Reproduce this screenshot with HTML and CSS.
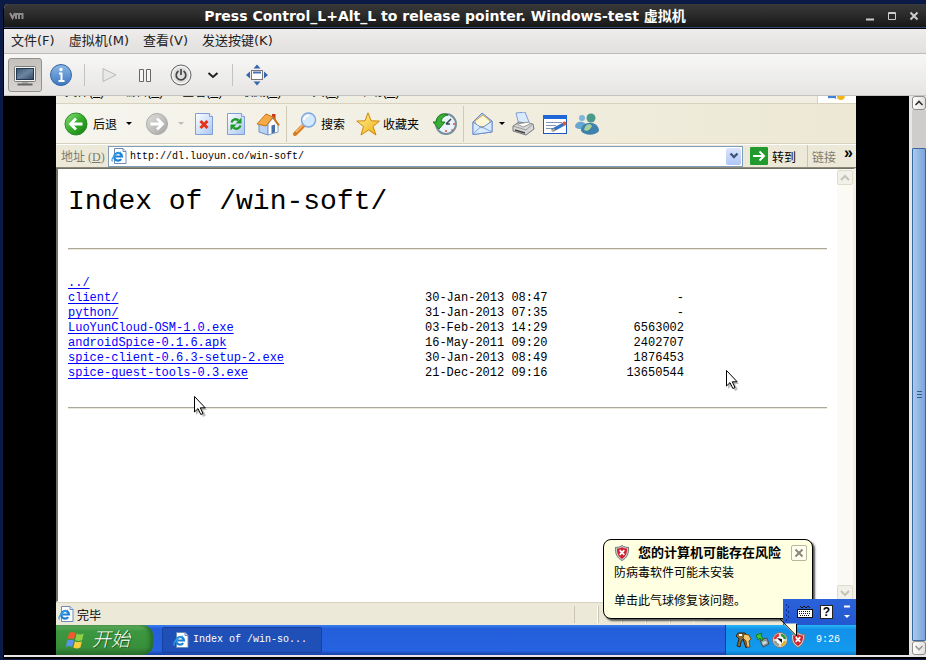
FILE: index.html
```html
<!DOCTYPE html>
<html lang="zh-CN">
<head>
<meta charset="utf-8">
<title>Windows-test 虚拟机</title>
<link rel="stylesheet" href="styles.css">
</head>
<body>
<svg width="0" height="0" class="defs" aria-hidden="true">
  <defs>
    <linearGradient id="gGreen" x1="0" y1="0" x2="1" y2="1"><stop offset="0" stop-color="#8fe07c"/><stop offset=".5" stop-color="#35ad2b"/><stop offset="1" stop-color="#157a12"/></linearGradient>
    <linearGradient id="gGrey" x1="0" y1="0" x2="1" y2="1"><stop offset="0" stop-color="#e0e0de"/><stop offset="1" stop-color="#a3a3a1"/></linearGradient>
    <linearGradient id="gPage" x1="0" y1="0" x2="1" y2="1"><stop offset="0" stop-color="#ffffff"/><stop offset="1" stop-color="#a9c6f2"/></linearGradient>
    <linearGradient id="gInfo" x1="0" y1="0" x2="0" y2="1"><stop offset="0" stop-color="#8db8e6"/><stop offset="1" stop-color="#3c78c0"/></linearGradient>
    <linearGradient id="gStar" x1="0" y1="0" x2="1" y2="1"><stop offset="0" stop-color="#fff79a"/><stop offset="1" stop-color="#f0a90c"/></linearGradient>
    <linearGradient id="gScreen" x1="0" y1="0" x2="1" y2="1"><stop offset="0" stop-color="#3b536f"/><stop offset=".5" stop-color="#6c86a0"/><stop offset="1" stop-color="#2f4661"/></linearGradient>
    <symbol id="ie" viewBox="0 0 16 16">
      <path d="M3.500.500h8.500l3 3v12H3.500z" fill="#fff" stroke="#6f8cb8"/><path d="M12 .500v3h3" fill="#dbe6f7" stroke="#6f8cb8"/>
      <path d="M10.200 11.200A3.900 3.900 0 1 1 11 8.500H4.500" fill="none" stroke="#1c7fd6" stroke-width="2.200"/>
      <path d="M1.500 13.500C-.500 12 3 5.500 10 4.200" fill="none" stroke="#3ca0e6" stroke-width="1.200"/>
    </symbol>
    <symbol id="shield" viewBox="0 0 16 16">
      <path d="M8 .500c2 1.500 4.500 2 6.500 1.800.500 6.200-1.500 10.700-6.500 13.200C3 13 1 8.500 1.500 2.300 3.500 2.500 6 2 8 .500z" fill="#c9cdd2" stroke="#777"/>
      <path d="M8 2.200c1.500 1 3.500 1.500 5 1.400.200 4.700-1.300 8.200-5 10.400C4.300 11.800 2.800 8.300 3 3.600 4.500 3.700 6.500 3.200 8 2.200z" fill="#d3202c"/>
      <path d="M5.700 5.200l4.600 4.600M10.300 5.200L5.700 9.800" stroke="#fff" stroke-width="1.800"/>
    </symbol>
    <symbol id="cursor" viewBox="0 0 14 22">
      <path d="M3 3v17l4-4 3 6 3-1.500-3-5.500h4z" fill="#000" opacity=".25"/>
      <path d="M1.500 1.500v15.500l3.500-3.400 2.800 5.900 2.200-1-2.700-5.700h4.900z" fill="#fff" stroke="#000"/>
    </symbol>
  </defs>
</svg>

<div class="window">
  <header class="titlebar">
    <svg class="vmlogo" width="16" height="10" viewBox="0 0 16 10"><path d="M1 2l2.500 5L6 2M7 8V3h3v5M10 3h3.500v5" fill="none" stroke="#8b8b8b" stroke-width="2"/><path d="M2 3l1.500 4" stroke="#b98888"/></svg>
    <h1 class="title">Press Control_L+Alt_L to release pointer. Windows-test 虚拟机</h1>
    <div class="winbtns">
      <button class="winbtn" aria-label="最小化"><svg width="10" height="10"><path d="M1 8.500h8" stroke="#ccc" stroke-width="2"/></svg></button>
      <button class="winbtn" aria-label="最大化"><svg width="10" height="10"><path d="M1.500 1.500h7v7h-7zM1 2.500h8" fill="none" stroke="#ccc"/></svg></button>
      <button class="winbtn" aria-label="关闭"><svg width="10" height="10"><path d="M1.500 1.500l7 7M8.500 1.500l-7 7" stroke="#ccc" stroke-width="2"/></svg></button>
    </div>
  </header>

  <nav class="menubar">
    <button class="menu">文件(F)</button>
    <button class="menu">虚拟机(M)</button>
    <button class="menu">查看(V)</button>
    <button class="menu">发送按键(K)</button>
  </nav>

  <div class="toolbar">
    <button class="tool pressed" aria-label="控制台"><svg width="24" height="24" viewBox="0 0 24 24"><rect x="1.500" y="3.500" width="21" height="15" rx="1" fill="#f4f4f2" stroke="#777a76"/><rect x="3.500" y="5.500" width="17" height="11" fill="url(#gScreen)" stroke="#243750"/><path d="M9 19h6v2H9z" fill="#aaa"/><path d="M4.500 21.500h15" stroke="#666" stroke-width="2"/></svg></button>
    <button class="tool" aria-label="详情"><svg width="24" height="24" viewBox="0 0 24 24"><circle cx="12" cy="12" r="10.500" fill="url(#gInfo)" stroke="#3465a4"/><circle cx="12" cy="6.500" r="1.700" fill="#fff"/><path d="M10 10.500h2.500v7M9.500 18h6" fill="none" stroke="#fff" stroke-width="2"/></svg></button>
    <span class="sep"></span>
    <button class="tool" aria-label="运行"><svg width="16" height="16" viewBox="0 0 16 16"><path d="M2 1.500v13L15 8z" fill="#e9e9e7" stroke="#b9b9b6"/></svg></button>
    <button class="tool" aria-label="暂停"><svg width="16" height="16" viewBox="0 0 16 16"><path d="M2.500 2.500h4v12h-4zM9.500 2.500h4v12h-4z" fill="#f5f5f5" stroke="#666"/></svg></button>
    <button class="tool" aria-label="关机"><svg width="24" height="24" viewBox="0 0 24 24"><circle cx="12" cy="12" r="10" fill="#ddd" stroke="#666"/><circle cx="12" cy="12" r="8.500" fill="none" stroke="#fff"/><path d="M9.500 8a4.800 4.800 0 1 0 5 0M12 6v6" fill="none" stroke="#444" stroke-width="1.700"/></svg></button>
    <button class="tool drop" aria-label="关机选项"><svg width="12" height="8" viewBox="0 0 12 8"><path d="M1.500 2L6 6l4.500-4" fill="none" stroke="#222" stroke-width="2"/></svg></button>
    <span class="sep"></span>
    <button class="tool" aria-label="全屏"><svg width="24" height="24" viewBox="0 0 24 24"><path d="M12 1.500l3.500 4h-7zM12 22.500l3.500-4h-7zM1 12l4-3.500v7zM23 12l-4-3.500v7z" fill="#3565ad"/><rect x="6.500" y="7.500" width="11" height="9" fill="#fff" stroke="#777"/><path d="M8 9.500h8" stroke="#4a73b5" stroke-width="2"/></svg></button>
  </div>

  <div class="viewport">
    <main class="guest">
      <div class="iemenu">
        <div class="ieitems"><span>文件(<u>F</u>)</span><span>编辑(<u>E</u>)</span><span>查看(<u>V</u>)</span><span>收藏(<u>A</u>)</span><span>工具(<u>T</u>)</span><span>帮助(<u>H</u>)</span></div>
        <div class="throbber"><svg width="20" height="6" viewBox="0 0 20 6"><path d="M1 0h8v3C6 1 4 3 1 2z" fill="#3d83dd"/><path d="M10 0h8l-1 3c-3 2-5 1-7-1z" fill="#f4b51c"/></svg></div>
      </div>

      <div class="ietools">
        <button class="ietool back"><svg width="24" height="24" viewBox="0 0 24 24"><circle cx="12" cy="12" r="11" fill="url(#gGreen)" stroke="#2d8a2a"/><path d="M18.500 12H7M12 6.500L6.500 12l5.500 5.500" fill="none" stroke="#fff" stroke-width="2.800"/></svg><span>后退</span><i class="caret"></i></button>
        <button class="ietool forward" aria-label="前进"><svg width="24" height="24" viewBox="0 0 24 24"><circle cx="12" cy="12" r="10.500" fill="url(#gGrey)" stroke="#aaa"/><path d="M5.500 12H17M12 6.500l5.500 5.500-5.500 5.500" fill="none" stroke="#fff" stroke-width="2.800"/></svg><i class="caret pale"></i></button>
        <button class="ietool" aria-label="停止"><svg width="24" height="24" viewBox="0 0 24 24"><path d="M3.500 1.500h14l3 3v18h-17z" fill="url(#gPage)" stroke="#7f9fd6"/><path d="M17.500 1.500v3h3" fill="#fff" stroke="#7f9fd6"/><path d="M8.500 9l7 7M15.500 9l-7 7" stroke="#e5331b" stroke-width="3"/></svg></button>
        <button class="ietool" aria-label="刷新"><svg width="24" height="24" viewBox="0 0 24 24"><path d="M3.500 1.500h14l3 3v18h-17z" fill="url(#gPage)" stroke="#7f9fd6"/><path d="M17.500 1.500v3h3" fill="#fff" stroke="#7f9fd6"/><path d="M7.500 10.500c1-3.500 5-4 7-2M16.500 13.500c-1 3.500-5 4-7 2" fill="none" stroke="#1d9a24" stroke-width="2.400"/><path d="M17.500 5.500v6h-6zM6.500 18.500v-6h6z" fill="#1d9a24"/></svg></button>
        <button class="ietool" aria-label="主页"><svg width="24" height="24" viewBox="0 0 24 24"><path d="M16 2h3.500v7H16z" fill="#c8371e"/><path d="M3 13v7l9 3V12L8 8z" fill="#b9d2f5" stroke="#7090c0"/><path d="M12 12l5-6 5 7v7l-10 3z" fill="#fff" stroke="#7c9ccc"/><path d="M1 12L10 2l7 3-7 9z" fill="#f6aa45" stroke="#c87419"/><path d="M16.500 4.500L23 13.500" stroke="#c87419" stroke-width="2"/><path d="M15.500 13.500l3.500-1v8l-3.500 1z" fill="#496da8"/></svg></button>
        <span class="iesep"></span>
        <button class="ietool search"><svg width="24" height="24" viewBox="0 0 24 24"><path d="M10 14L2 22" stroke="#d97c22" stroke-width="4" stroke-linecap="round"/><path d="M11 12L3 20" stroke="#f6bd73" stroke-width="1.500"/><circle cx="15.500" cy="8" r="7" fill="#d3eafc" stroke="#80a7df" stroke-width="1.500"/><path d="M11 8a5 5 0 0 1 5-4.500" fill="none" stroke="#fff" stroke-width="2"/></svg><span>搜索</span></button>
        <button class="ietool fav"><svg width="24" height="24" viewBox="0 0 24 24"><path d="M12 .800l3.200 8 8.300.300-6.500 5.400 3 8.500-7.500-5L5 23l2.500-8.500L.800 9.100l8.200-.300z" fill="url(#gStar)" stroke="#cf870c"/></svg><span>收藏夹</span></button>
        <button class="ietool history" aria-label="历史"><svg width="24" height="24" viewBox="0 0 24 24"><circle cx="13" cy="12" r="10" fill="#e9f3fa" stroke="#78909e" stroke-width="2"/><path d="M13 12l5-5M13 12h4" stroke="#345" stroke-width="1.500"/><path d="M13 18v2M20 12h2M18.500 17.500l1 1" stroke="#e04b3d" stroke-width="1.500"/><path d="M15 3C9 0 3 4 3.500 10H0l6 7 6-7H8.500C8 6 11 4 15 3z" fill="#39ad35" stroke="#1d7d20"/></svg></button>
        <span class="iesep"></span>
        <button class="ietool mail" aria-label="邮件"><svg width="24" height="24" viewBox="0 0 24 24"><path d="M2 10L11 1l10 8v11L2 22.500z" fill="#a9cbf4" stroke="#6688c8"/><path d="M4 9l8-6 7 6-1 5-13 1z" fill="#fff6d6" stroke="#dfa846"/><path d="M2 10l9 6 10-7v11L2 22.500z" fill="#d9ebff" stroke="#6b8ecb"/><path d="M2 22l8-7.500 11 5.500" fill="none" stroke="#7c9ed8"/></svg><i class="caret"></i></button>
        <button class="ietool" aria-label="打印"><svg width="24" height="24" viewBox="0 0 24 24"><path d="M5 1l9-1 4 10-10 3z" fill="#d9eaff" stroke="#7f9fd0"/><path d="M2 14l6-4 14 2 1 5-8 6-13-4z" fill="#d8d8d8" stroke="#777"/><path d="M2 14l13 4 7-6" fill="none" stroke="#999"/><path d="M6 12l12-2 1 2-7 3z" fill="#fff" stroke="#999"/><path d="M4 18l10 3" stroke="#444" stroke-width="1.500"/></svg></button>
        <button class="ietool" aria-label="编辑"><svg width="24" height="24" viewBox="0 0 24 24"><rect x=".500" y="3.500" width="23" height="18" fill="#fff" stroke="#1c56bf"/><path d="M0 3h24v4H0z" fill="#1f66d6"/><path d="M3 10.500h16M3 13.500h10M3 16.500h7" stroke="#8395ad"/><path d="M9 18.500L21 12" stroke="#3674c8" stroke-width="3.500"/><path d="M7 19.500l4-3 1 2z" fill="#e8b15f"/><circle cx="21.500" cy="11.500" r="2" fill="#e2572a"/></svg></button>
        <button class="ietool" aria-label="Messenger"><svg width="24" height="24" viewBox="0 0 24 24"><circle cx="7" cy="6" r="3" fill="#7fb5dc"/><path d="M0 15c0-7 11-7 12 0-3 3-9 3-12 0z" fill="#6aa6d2"/><circle cx="16" cy="6" r="4.500" fill="#4b9a8a"/><path d="M6 19c0-11 18-11 18 0-4 5-14 5-18 0z" fill="#3f82ae"/><path d="M9 18c1-6 6-7 8-4-2 4-5 6-8 4z" fill="#a7d29b"/></svg></button>
      </div>

      <div class="address">
        <label for="url">地址 (<u>D</u>)</label>
        <div class="combo">
          <svg width="16" height="16"><use href="#ie"/></svg>
          <input id="url" type="text" value="http://dl.luoyun.co/win-soft/" spellcheck="false">
          <button class="combobtn" aria-label="展开"><svg width="10" height="8" viewBox="0 0 10 8"><path d="M1.500 1.500L5 5l3.500-3.500" fill="none" stroke="#3f5680" stroke-width="2.400"/></svg></button>
        </div>
        <button class="go"><svg width="18" height="18" viewBox="0 0 18 18"><rect width="18" height="18" rx="1" fill="#219a2e"/><path d="M3 9h11M9.500 4.500L14 9l-4.500 4.500" fill="none" stroke="#fff" stroke-width="2"/></svg><span>转到</span></button>
        <button class="links">链接</button><b class="more">»</b>
      </div>

      <section class="page">
        <article class="listing">
          <h2>Index of /win-soft/</h2>
          <hr>
          <table>
            <tr><td><a href="#">../</a></td><td></td><td></td></tr>
            <tr><td><a href="#">client/</a></td><td>30-Jan-2013 08:47</td><td>-</td></tr>
            <tr><td><a href="#">python/</a></td><td>31-Jan-2013 07:35</td><td>-</td></tr>
            <tr><td><a href="#">LuoYunCloud-OSM-1.0.exe</a></td><td>03-Feb-2013 14:29</td><td>6563002</td></tr>
            <tr><td><a href="#">androidSpice-0.1.6.apk</a></td><td>16-May-2011 09:20</td><td>2402707</td></tr>
            <tr><td><a href="#">spice-client-0.6.3-setup-2.exe</a></td><td>30-Jan-2013 08:49</td><td>1876453</td></tr>
            <tr><td><a href="#">spice-guest-tools-0.3.exe</a></td><td>21-Dec-2012 09:16</td><td>13650544</td></tr>
          </table>
          <hr>
        </article>
        <div class="iescroll">
          <button aria-label="向上"><svg width="10" height="8" viewBox="0 0 10 8"><path d="M1 6l4-4 4 4" fill="none" stroke="#c4c3b8" stroke-width="2"/></svg></button>
          <button aria-label="向下"><svg width="10" height="8" viewBox="0 0 10 8"><path d="M1 2l4 4 4-4" fill="none" stroke="#c4c3b8" stroke-width="2"/></svg></button>
        </div>
      </section>

      <footer class="status"><svg width="16" height="16"><use href="#ie"/></svg><span class="done">完毕</span><i></i><i></i><i></i><i></i><i></i><span class="zone"><svg width="14" height="14"><circle cx="7" cy="7" r="6.500" fill="#17379a"/></svg></span></footer>

      <div class="taskbar">
        <button class="start"><svg width="20" height="18" viewBox="0 0 20 18"><path d="M3 2c2.500-1.500 4.500-1.300 6.500 0L8 8.500C6 7.200 4 7.200 1.500 8.300z" fill="#ee5a2c"/><path d="M10.700 2.600c2.300 1.200 4.500 1.200 7 0L16.200 9c-2.500 1.200-4.500 1.200-7 0z" fill="#8fd04a"/><path d="M1.200 9.600c2.500-1.200 4.500-1.200 6.500 0L6.200 16c-2-1.200-4-1.200-6.200 0z" fill="#5a94ef"/><path d="M8.900 10.200c2.500 1.200 4.700 1.200 7 0l-1.500 6.300c-2.500 1.300-4.700 1.300-7 0z" fill="#f9cf3f"/></svg><span>开始</span></button>
        <button class="task"><svg width="16" height="16"><use href="#ie"/></svg><span>Index of /win-so...</span></button>
        <div class="tray">
          <svg width="16" height="16" viewBox="0 0 16 16"><path d="M2 1h7l3 3-2 2 2 8-2 2-3-9-2 3-1 5-3-1 2-7-3-3z" fill="#8a6a36" stroke="#2c2413"/><path d="M8 2l5 1 2 4-2 2 1 6h-3l-1-6-3-3z" fill="#f0c775" stroke="#6a4b18"/><path d="M3 3h3" stroke="#fff" stroke-width="2"/></svg>
          <svg width="16" height="16" viewBox="0 0 16 16"><path d="M6 8l7-2 2 6-6 3z" fill="#8a9499" stroke="#3e5058"/><path d="M8 10l4-1 1 2-4 2z" fill="#cfd8da"/><path d="M2 3l6-2-1 3c2 1 2 3 1 5L6 6 4 8z" fill="#45c23e" stroke="#177a1c"/></svg>
          <svg width="16" height="16" viewBox="0 0 16 16"><circle cx="8" cy="8" r="7.500" fill="#d8d8d0" stroke="#777"/><circle cx="8" cy="8" r="4.500" fill="#fff"/><path d="M3 7a5 5 0 0 1 4-4" stroke="#d33" stroke-width="2.500" fill="none"/><path d="M9 3a5 5 0 0 1 4 4" stroke="#2a9a36" stroke-width="2.500" fill="none"/><path d="M13 9a5 5 0 0 1-4 4" stroke="#e3b21d" stroke-width="2.500" fill="none"/><path d="M7 13a5 5 0 0 1-4-4" stroke="#999" stroke-width="2.500" fill="none"/><path d="M5 6l5 1v4z" fill="#111"/></svg>
          <svg width="16" height="16"><use href="#shield"/></svg>
          <time>9:26</time>
        </div>
      </div>

      <aside class="balloon">
        <div class="bhead"><svg width="16" height="16"><use href="#shield"/></svg><strong>您的计算机可能存在风险</strong><button aria-label="关闭提示"><svg width="10" height="10"><path d="M1.500 1.500l7 7M8.500 1.500l-7 7" stroke="#8c8878" stroke-width="2"/></svg></button></div>
        <p>防病毒软件可能未安装</p>
        <p class="hint">单击此气球修复该问题。</p>
      </aside>
      <div class="langbar">
        <svg width="5" height="20"><path d="M1.500 2v17M3.500 4v15" stroke="#0b2c94" stroke-dasharray="2 3"/></svg>
        <svg width="16" height="14" viewBox="0 0 16 14"><path d="M3 1l2 2 2-2 2 2 2-2 2 2" fill="none" stroke="#111"/><rect x=".500" y="4.500" width="15" height="8" fill="#fff" stroke="#111"/><path d="M2 6.500h12M2 8.500h12M3 10.500h10" stroke="#111" stroke-dasharray="1 1"/></svg>
        <button aria-label="帮助">?</button>
        <svg class="langopts" width="6" height="14"><path d="M0 1.500h6" stroke="#fff" stroke-width="2"/><path d="M0 10h6l-3 3z" fill="#fff"/></svg>
      </div>
      <svg class="tail" width="22" height="24" viewBox="0 0 22 24"><path d="M5 5.500h13.500V19L1 1" fill="#ffffe1"/><path d="M1 0l17.500 18V6" fill="none" stroke="#000"/></svg>
      <svg class="cursor one" width="14" height="22"><use href="#cursor"/></svg>
      <svg class="cursor two" width="14" height="22"><use href="#cursor"/></svg>
    </main>
    <div class="vscroll">
      <button aria-label="向上滚动"><svg width="10" height="8" viewBox="0 0 10 8"><path d="M1.500 6L5 2.500 8.500 6" fill="none" stroke="#333" stroke-width="1.600"/></svg></button>
      <div class="track"><div class="thumb"></div></div>
      <button aria-label="向下滚动"><svg width="10" height="8" viewBox="0 0 10 8"><path d="M1.500 2L5 5.500 8.500 2" fill="none" stroke="#999" stroke-width="1.600"/></svg></button>
    </div>
  </div>
</div>
</body>
</html>
```
FILE: styles.css
```css
* { box-sizing: border-box; }
body {
  margin: 0;
  height: 100vh;
  padding: 4px 0 1px 3px;
  background: #0c1a48;
  font-family: "DejaVu Sans", "Noto Sans CJK SC", sans-serif;
  font-size: 12px;
  overflow: hidden;
}
button { border: 0; margin: 0; padding: 0; background: none; font: inherit; color: inherit; }
svg { display: block; flex: none; }
.defs { position: absolute; }

.window {
  height: 100%;
  display: flex;
  flex-direction: column;
  border-left: 1px solid #000;
  border-bottom: 2px solid #000;
  border-top-left-radius: 5px;
  background: #e8e7e5;
  overflow: hidden;
}
.titlebar {
  flex: none;
  display: flex;
  align-items: center;
  height: 25px;
  padding: 0 7px 0 5px;
  background: linear-gradient(#393939, #2b2b2b 45%, #161616);
  border-bottom: 1px solid #000;
  box-shadow: inset 0 -1px #33496b;
}
.title {
  flex: 1;
  margin: 0;
  text-align: center;
  color: #fff;
  font-size: 14px;
  line-height: 22px;
  font-weight: bold;
  white-space: nowrap;
}
.winbtns { display: flex; gap: 12px; }
.winbtn { width: 10px; height: 10px; }

.menubar {
  flex: none;
  display: flex;
  gap: 14px;
  height: 25px;
  padding: 0 7px;
  background: linear-gradient(#efedec, #e2e0df);
  border-bottom: 1px solid #bdbbb9;
}
.menu { font-size: 13px; line-height: 24px; white-space: nowrap; color: #222; }

.toolbar {
  flex: none;
  display: flex;
  align-items: center;
  height: 42px;
  padding: 0 4px;
  background: linear-gradient(#f7f7f5, #e6e5e3);
  border-bottom: 1px solid #c5c3c1;
}
.tool { width: 36px; height: 34px; display: grid; place-items: center; }
.tool.pressed {
  width: 34px;
  margin-right: 1px;
  border: 1px solid #94918d;
  border-radius: 3px;
  background: linear-gradient(#c4c1bd, #d6d3d0);
}
.tool.drop { width: 28px; }
.sep { width: 1px; height: 22px; margin: 0 6px 0 5px; background: #c4c2bf; }

.viewport { flex: 1; min-height: 0; display: flex; background: #e8e7e5; padding-bottom: 2px; }
.guest {
  position: relative;
  flex: 1;
  min-width: 0;
  display: flex;
  flex-direction: column;
  background: #ece9d8;
  border: 0 solid #000;
  border-width: 0 53px 0 52px;
  font-family: "Liberation Sans", "Noto Sans CJK SC", sans-serif;
}

.iemenu { flex: none; display: flex; height: 8px; background: #f0eee2; border-bottom: 1px solid #d6d2bd; }
.ieitems { flex: 1; display: flex; align-items: flex-end; gap: 19px; height: 3px; padding-left: 9px; overflow: hidden; line-height: 14px; }
.ieitems span { white-space: nowrap; }
.throbber { width: 39px; padding-left: 9px; background: #fff; border-left: 1px solid #d6d2bd; }

.ietools {
  flex: none;
  display: flex;
  align-items: center;
  height: 40px;
  padding: 0 8px;
  background: linear-gradient(90deg, #f6f5ee, #ece8d4);
  border-bottom: 1px solid #d6d2bd;
}
.ietool { display: flex; align-items: center; justify-content: center; gap: 4px; min-width: 32px; height: 32px; white-space: nowrap; }
.back { gap: 5px; }
.caret { border: 3px solid transparent; border-top-color: #000; border-bottom: 0; margin-left: 4px; }
.caret.pale { border-top-color: #bbb; }
.forward { gap: 5px; margin: 0 4px 0 13px; }
.iesep { width: 1px; height: 36px; background: #cfcbb6; margin: 0 4px 0 2px; }
.search { margin: 0 11px 0 2px; }
.fav { gap: 3px; margin-right: 10px; }
.mail { gap: 0; margin: 0 2px 0 3px; }

.address {
  flex: none;
  display: flex;
  align-items: center;
  height: 24px;
  padding: 1px 3px 1px 5px;
  border-top: 1px solid #fff;
  border-bottom: 1px solid #8c897a;
  color: #000;
}
.address label { width: 47px; color: #7d7b70; font-family: "Liberation Serif", "Noto Sans CJK SC", serif; white-space: nowrap; }
.combo { flex: 1; display: flex; align-items: center; height: 21px; padding: 1px 1px 1px 2px; background: #fff; border: 1px solid #7f9db9; }
.combo input {
  flex: 1;
  min-width: 0;
  border: 0;
  outline: 0;
  padding: 2px 3px 0;
  background: none;
  color: #000;
  font: 10px/16px "Liberation Mono", monospace;
}
.combobtn { width: 15px; height: 17px; display: grid; place-items: center; background: linear-gradient(#dbe6fd, #b0c6f7); border-radius: 2px; }
.go { display: flex; align-items: center; gap: 4px; padding: 0 11px 0 7px; }
.links { height: 22px; padding: 0 8px 0 4px; border-left: 1px solid #c9c5b2; color: #7d7b70; }
.more { font-size: 16px; line-height: 14px; align-self: flex-start; }

.page { flex: 1; min-height: 0; display: flex; background: #fff; border: 1px solid #716f64; border-width: 1px 3px 1px 2px; border-right-color: #f1efe2; border-bottom-color: #fff; }
.listing { flex: 1; min-width: 0; padding: 15px 10px 0; font: 12px/15px "Liberation Mono", monospace; color: #000; }
.listing h2 { margin: 0 0 29px; font-size: 28px; line-height: 35px; font-weight: normal; }
.listing hr { height: 2px; margin: 0; border: 0; border-top: 1px solid #aca899; border-bottom: 1px solid #ece9d8; }
.listing table { width: 616px; margin: 26px 0; border-collapse: collapse; table-layout: fixed; }
.listing td { padding: 0; height: 15px; white-space: nowrap; }
.listing td:first-child { width: 357px; }
.listing td:last-child { text-align: right; }
.listing a { color: #00f; text-underline-offset: 2px; }
.iescroll { width: 16px; display: flex; flex-direction: column; justify-content: space-between; background: #fbfaf5; padding: 1px 0; }
.iescroll button { height: 15px; display: grid; place-items: center; background: #f2f1e9; border: 1px solid #dedccb; border-radius: 2px; }

.status { flex: none; display: flex; align-items: center; height: 23px; padding: 0 2px; border-top: 1px solid #d6d2bd; }
.done { flex: 1; padding-left: 3px; }
.status i { width: 24px; height: 17px; border-left: 1px solid #c9c5b2; border-right: 1px solid #fff; }
.zone { width: 160px; padding-left: 6px; }

.taskbar { flex: none; display: flex; height: 30px; background: linear-gradient(#3a80ee, #245edb 12%, #2663e0 85%, #1941a5); color: #fff; }
.start {
  display: flex;
  align-items: center;
  gap: 6px;
  width: 97px;
  padding-left: 10px;
  background: linear-gradient(#6fb96a, #3c9840 20%, #388f3a 75%, #2a6f2c);
  border-radius: 0 10px 10px 0;
  box-shadow: inset -3px 0 4px #246b28;
}
.start span { font-size: 19px; line-height: 24px; font-style: italic; font-weight: 300; text-shadow: 1px 1px #235a24; }
.task {
  display: flex;
  align-items: center;
  gap: 4px;
  width: 160px;
  height: 26px;
  margin: 2px 0 0 9px;
  padding-left: 10px;
  background: #1e50b8;
  border: 1px solid #1a419c;
  border-radius: 2px;
  font: 10px/16px "Liberation Mono", monospace;
  white-space: nowrap;
}
.tray { display: flex; align-items: center; gap: 2px; width: 131px; margin-left: auto; padding-left: 10px; background: linear-gradient(#28b5f4, #1290e9 15%, #129bee 85%, #0d73c4); border-left: 1px solid #0b3fa0; }
.tray time { margin-left: 8px; font: 10px/16px "Liberation Mono", monospace; }

.balloon {
  position: absolute;
  right: 43px;
  bottom: 36px;
  width: 210px;
  height: 80px;
  padding: 3px 5px 0 10px;
  background: #ffffe1;
  border: 1px solid #000;
  border-radius: 8px;
  box-shadow: 2px 2px 2px #555;
  line-height: 18px;
  color: #000;
}
.bhead { display: flex; align-items: center; height: 20px; }
.bhead strong { padding-left: 8px; font-size: 13px; white-space: nowrap; }
.bhead button { width: 16px; height: 16px; margin-left: auto; display: grid; place-items: center; border: 1px solid #b8b5a2; border-radius: 2px; background: #fffff0; }
.balloon p { margin: 0; line-height: 20px; }
.balloon .hint { margin-top: 8px; }
.langbar { position: absolute; right: 0; bottom: 30px; width: 73px; height: 26px; display: flex; align-items: center; gap: 7px; padding: 0 6px 0 2px; background: linear-gradient(#2b62d9, #2257d0); }
.langbar button { width: 13px; height: 14px; background: #fff; color: #000; border: 1px solid #222; font-weight: bold; line-height: 12px; }
.langopts { margin-left: auto; }
.tail { position: absolute; right: 56px; bottom: 13px; }
.cursor { position: absolute; }
.one { left: 137px; top: 299px; }
.two { left: 669px; top: 273px; }

.vscroll { width: 17px; display: flex; flex-direction: column; padding-left: 3px; }
.vscroll button { flex: none; height: 14px; display: grid; place-items: center; border: 1px solid #8f8c89; border-radius: 3px; background: linear-gradient(90deg, #fff, #e2e0dd); }
.track { flex: 1; padding: 38px 0 0; background: #cfcdcb; }
.thumb { height: 100%; border: 1px solid #3a689f; border-radius: 1px; background: repeating-linear-gradient(#305d94 0 1px, transparent 1px 3px) center / 5px 8px no-repeat, linear-gradient(90deg, #a9c9ee, #7ba4da); }
```
